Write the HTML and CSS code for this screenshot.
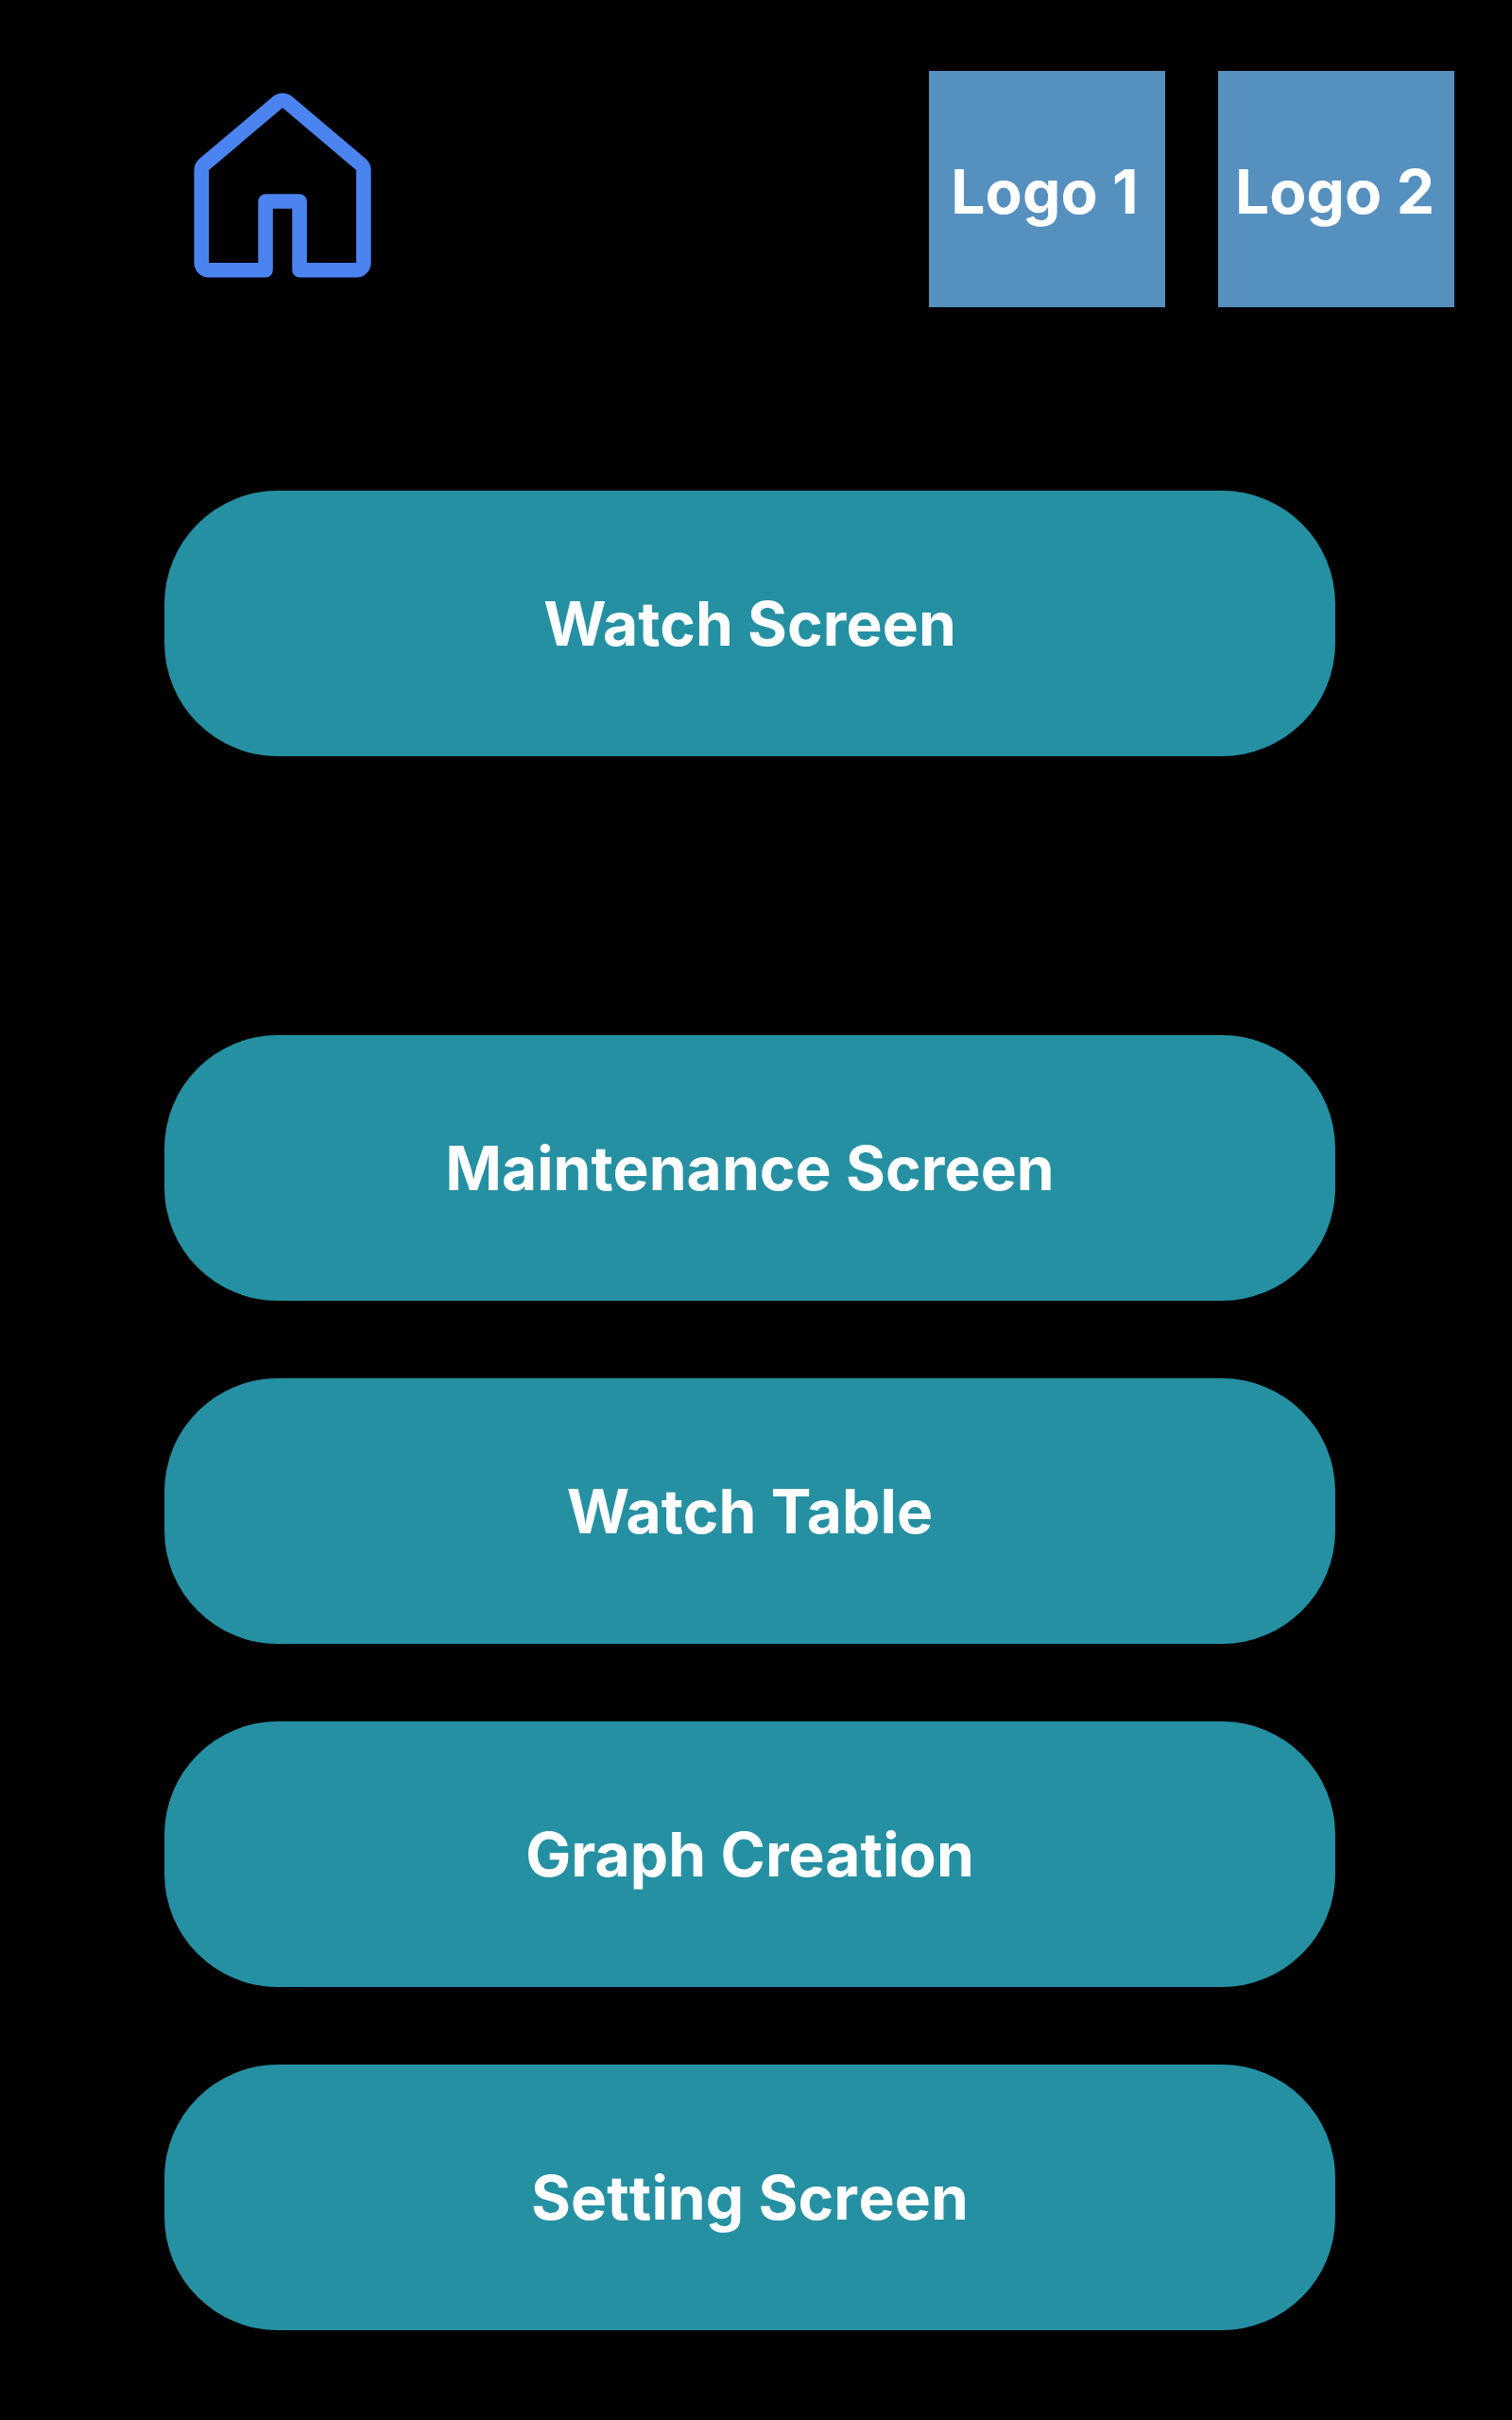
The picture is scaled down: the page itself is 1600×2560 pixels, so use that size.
FILE: index.html
```html
<!DOCTYPE html>
<html lang="en">
<head>
<meta charset="utf-8">
<title>Home</title>
<link rel="stylesheet" href="styles.css">
</head>
<body>
<header class="header">
  <a class="home" href="#" aria-label="Home">
    <svg class="home-icon" viewBox="0 0 188 197" fill="none">
      <path d="M8.200 83V181A7.800 7.800 0 0 0 16 188.800H76V116H112V188.800H172A7.800 7.800 0 0 0 179.800 181V83A7.800 7.800 0 0 0 177.040 77.050L99.040 11.050A7.800 7.800 0 0 0 88.960 11.050L10.960 77.050A7.800 7.800 0 0 0 8.200 83Z" stroke="#4b84f1" stroke-width="15.600" stroke-linejoin="round"/>
    </svg>
  </a>
  <div class="logos">
    <div class="logo logo-first">Logo 1</div>
    <div class="logo">Logo 2</div>
  </div>
</header>
<nav class="menu">
  <button class="menu-button menu-button-primary">Watch Screen</button>
  <button class="menu-button">Maintenance Screen</button>
  <button class="menu-button">Watch Table</button>
  <button class="menu-button">Graph Creation</button>
  <button class="menu-button menu-button-unkerned">Setting Screen</button>
</nav>
</body>
</html>
```
FILE: styles.css
```css
* {
  box-sizing: border-box;
}

body {
  margin: 0;
  min-height: 2560px;
  background: #000;
  color: #fff;
  font-family: Inter, sans-serif;
  font-size: 64px;
  font-weight: 700;
  letter-spacing: 0.1px;
}

.header {
  display: flex;
  justify-content: space-between;
  padding: 75px 61px 0 205px;
}

.home {
  display: block;
  margin-top: 22px;
}

.home-icon {
  display: block;
  width: 188px;
  height: 197px;
}

.logos {
  display: flex;
  gap: 56px;
}

.logo {
  display: flex;
  align-items: center;
  justify-content: center;
  width: 250px;
  height: 250px;
  padding: 5px 3px 0 0;
  background: #5690be;
  white-space: nowrap;
}

.logo-first {
  padding-right: 5px;
}

.menu {
  display: flex;
  flex-direction: column;
  gap: 82px;
  width: 1239px;
  margin: 194px 0 0 174px;
}

.menu-button {
  height: 281px;
  padding: 0;
  border: 0;
  border-radius: 120px;
  background: #2690a3;
  color: inherit;
  font: inherit;
  letter-spacing: inherit;
}

.menu-button-primary {
  margin-bottom: 213px;
}

.menu-button-unkerned {
  font-kerning: none;
}
```
